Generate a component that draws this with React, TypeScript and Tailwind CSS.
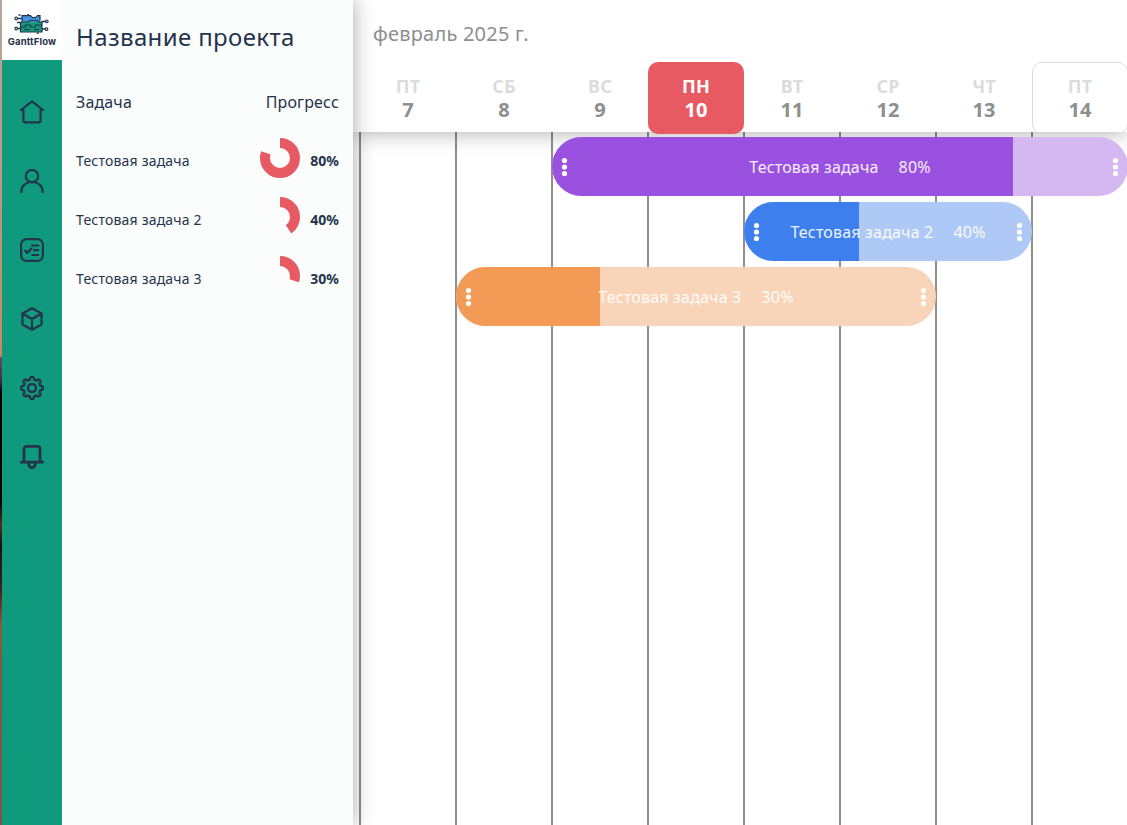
import React from "react";

const DAY = 96;

const tasks = [
  { name: "Тестовая задача", progress: 80, start: 2, days: 6, solid: "bg-[#9b51e0]", light: "bg-[#d5b7f2]" },
  { name: "Тестовая задача 2", progress: 40, start: 4, days: 3, solid: "bg-[#3d7fed]", light: "bg-[#afc9f7]" },
  { name: "Тестовая задача 3", progress: 30, start: 1, days: 5, solid: "bg-[#f29a56]", light: "bg-[#f8d4b9]" },
];

const days = [
  { label: "ПТ", date: 7 },
  { label: "СБ", date: 8 },
  { label: "ВС", date: 9 },
  { label: "ПН", date: 10, kind: "today" },
  { label: "ВТ", date: 11 },
  { label: "СР", date: 12 },
  { label: "ЧТ", date: 13 },
  { label: "ПТ", date: 14, kind: "outlined" },
];

function Icon({ width = 2.2, children }: { width?: number; children: React.ReactNode }) {
  return (
    <svg width="24" height="24" viewBox="0 0 24 24" fill="none" stroke="#25344c" strokeWidth={width} strokeLinecap="round" strokeLinejoin="round" className="shrink-0">
      {children}
    </svg>
  );
}

function gearPath() {
  const pts: string[] = [];
  const n = 8;
  for (let i = 0; i < 96; i++) {
    const a = (i / 96) * Math.PI * 2;
    const wave = Math.tanh(2.2 * Math.cos(n * a));
    const r = 9.7 + 1.25 * wave;
    pts.push(`${(12 + r * Math.sin(a)).toFixed(2)} ${(12 - r * Math.cos(a)).toFixed(2)}`);
  }
  return `M${pts.join("L")}Z`;
}

function Logo() {
  return (
    <div className="flex h-[60px] w-full flex-col items-center bg-white pt-[14px]">
      <svg width="36" height="20" viewBox="0 0 36 20" fill="none" className="shrink-0">
        <path d="M8 2h8.500l2 2h3l2-2h2.500v6H8z" fill="#4295dc" />
        <path d="M6.500 8H28v10H6.500z" fill="#149b7c" />
        <path d="M8 8V1.700h8.500l2 2h3l2-2H26v5M6.500 8h8l1.500-1.500h7L24.500 8H28M6.500 8v10H28V7M6.500 13h5v-2h5v2h5v-2H28M10 15.500h6M20 15.500h5" stroke="#25344c" strokeWidth="1.200" />
        <path d="M8 4.500H3M7 14.500H3M28 7.500h4M28 15h4M6 8.500H3M4.500 1h2M22.500 19.200h2.500M13 .8h2" stroke="#25344c" strokeWidth="1.300" />
        <g fill="white" stroke="#25344c" strokeWidth="1.200">
          <circle cx="2.200" cy="4.500" r="1.300" />
          <circle cx="2.200" cy="14.500" r="1.300" />
          <circle cx="32.800" cy="7.300" r="1.300" />
          <circle cx="32.500" cy="15.200" r="1.300" />
        </g>
      </svg>
      <span className="mt-[2px] font-['Inter',sans-serif] text-[9.5px] font-bold leading-[11px] tracking-[0.15px] text-[#25344c]">GanttFlow</span>
    </div>
  );
}

function Sidebar() {
  return (
    <nav className="z-30 flex w-[60px] shrink-0 flex-col items-center bg-[#0f997d]">
      <Logo />
      <div className="flex flex-col gap-[45px] pt-[40px]">
        <Icon>
          <path d="M1 10 12 1.300 23 10M3.400 8.600v11.800a2 2 0 0 0 2 2h13.200a2 2 0 0 0 2-2V8.600" />
        </Icon>
        <Icon>
          <circle cx="12" cy="7.200" r="6.200" />
          <path d="M1.300 23.200v-.6c0-5.600 4.500-9.600 10.700-9.600s10.700 4 10.700 9.600v.6" />
        </Icon>
        <Icon>
          <rect x="1.100" y="1.100" width="21.800" height="21.800" rx="5.500" />
          <path d="m5.200 12.700 2.200 2.200 4-4.300M12.200 7.500h6M14.200 12.200h4M12.200 17h6" />
        </Icon>
        <Icon>
          <path d="M12 1.300 21.600 6.500v11L12 22.800 2.400 17.500v-11zM2.400 6.500 12 12l9.600-5.500M12 12v10.800" />
        </Icon>
        <Icon width={2.4}>
          <path d={gearPath()} />
          <circle cx="12" cy="12" r="4" />
        </Icon>
        <Icon width={2.8}>
          <path d="M4 17V3.900A2.500 2.500 0 0 1 6.500 1.400h11A2.500 2.500 0 0 1 20 3.900V17M1.300 17.200h21.400M8.800 17.700v1.800a3.200 3.200 0 0 0 6.400 0v-1.800" />
        </Icon>
      </div>
    </nav>
  );
}

function Donut({ value }: { value: number }) {
  const c = 2 * Math.PI * 15;
  return (
    <svg width="40" height="40" viewBox="0 0 40 40" className="shrink-0">
      <circle cx="20" cy="20" r="15" fill="none" stroke="#e85a62" strokeWidth="10" strokeDasharray={`${(c * value) / 100} ${c}`} transform="rotate(-90 20 20)" />
    </svg>
  );
}

function TaskPanel() {
  return (
    <aside className="z-20 w-[291px] shrink-0 bg-[#fbfdfc] px-[14px] text-[#25344c] shadow-[0_0_20px_rgba(0,0,0,0.35)]">
      <h1 className="pt-[19px] text-2xl leading-9 tracking-[0.37px]">Название проекта</h1>
      <div className="mt-[35px] flex justify-between text-base leading-6 tracking-[0.15px]">
        <span>Задача</span>
        <span>Прогресс</span>
      </div>
      <div className="mt-[24px] flex flex-col gap-[19px]">
        {tasks.map((t) => (
          <div key={t.name} className="flex h-10 items-center text-sm">
            <span className="flex-1 pt-[6px] tracking-[0.19px]">{t.name}</span>
            <Donut value={t.progress} />
            <span className="w-[39px] pt-[6px] text-right font-bold">{t.progress}%</span>
          </div>
        ))}
      </div>
    </aside>
  );
}

function DayCell({ label, date, kind }: { label: string; date: number; kind?: string }) {
  const box =
    kind === "today"
      ? "bg-[#e85a62] text-white pt-[12px]"
      : kind === "outlined"
        ? "border border-[#dcdcdc] text-[#8e8e8e] pt-[11px]"
        : "border border-transparent text-[#8e8e8e] pt-[11px]";
  return (
    <div className={`flex h-[72px] w-24 shrink-0 flex-col items-center rounded-[10px] font-bold ${box}`}>
      <span className={`text-lg leading-6 tracking-[0.2px] ${kind === "today" ? "" : "text-[#dcdcdc]"}`}>{label}</span>
      <span className="text-xl leading-6">{date}</span>
    </div>
  );
}

function Dots() {
  return (
    <svg width="5" height="18" viewBox="0 0 5 18" fill="white" className="shrink-0 overflow-visible">
      <circle cx="2.5" cy="2.5" r="2.600" />
      <circle cx="2.5" cy="9" r="2.600" />
      <circle cx="2.5" cy="15.500" r="2.600" />
    </svg>
  );
}

function Bar({ task }: { task: (typeof tasks)[number] }) {
  return (
    <div
      className={`grid h-[59px] shrink-0 overflow-hidden rounded-[29.5px] ${task.light}`}
      style={{ marginLeft: task.start * DAY, width: task.days * DAY }}
    >
      <div className={`col-start-1 row-start-1 h-full ${task.solid}`} style={{ width: `${task.progress}%` }} />
      <div className="z-10 col-start-1 row-start-1 flex items-center justify-between px-[10px] text-white">
        <Dots />
        <div className="flex gap-5 pt-px text-base tracking-[0.18px] text-white/90">
          <span>{task.name}</span>
          <span>{task.progress}%</span>
        </div>
        <Dots />
      </div>
    </div>
  );
}

function Timeline() {
  return (
    <main className="flex min-w-0 flex-1 flex-col overflow-hidden bg-white">
      <header className="z-10 h-[132px] shrink-0 bg-white shadow-[0_0_20px_rgba(0,0,0,0.35)]">
        <div className="h-[62px] pl-5 pt-[19px] text-xl leading-[30px] tracking-[0.22px] text-[#8e8e8e]">февраль 2025 г.</div>
        <div className="flex pl-[7px]">
          {days.map((d) => (
            <div key={d.date} className={d.kind === "today" ? "h-[72px] shrink-0" : "h-[70px] shrink-0 overflow-hidden"}>
              <DayCell {...d} />
            </div>
          ))}
        </div>
      </header>
      <div className="grid flex-1">
        <div className="col-start-1 row-start-1 flex pl-[6px]">
          {days.map((d) => (
            <div key={d.date} className="w-24 shrink-0 border-l-2 border-[#8e8e8e]" />
          ))}
        </div>
        <div className="z-10 col-start-1 row-start-1 flex flex-col gap-[6px] pl-[7px] pt-[5px]">
          {tasks.map((t) => (
            <Bar key={t.name} task={t} />
          ))}
        </div>
      </div>
    </main>
  );
}

export default function App() {
  return (
    <div className="flex h-[825px] w-[1127px] overflow-hidden bg-white font-['Noto_Sans',sans-serif]">
      <div className="z-30 w-[2px] shrink-0 bg-[linear-gradient(to_bottom,#b5a69c_0px,#c58a62_356px,#555055_358px,#3a383c_380px,#000_393px,#050403_500px,#4a3218_525px,#1a120c_545px,#3a2619_590px,#8a5a3a_625px,#7a5545_825px)]" />
      <Sidebar />
      <TaskPanel />
      <Timeline />
    </div>
  );
}
